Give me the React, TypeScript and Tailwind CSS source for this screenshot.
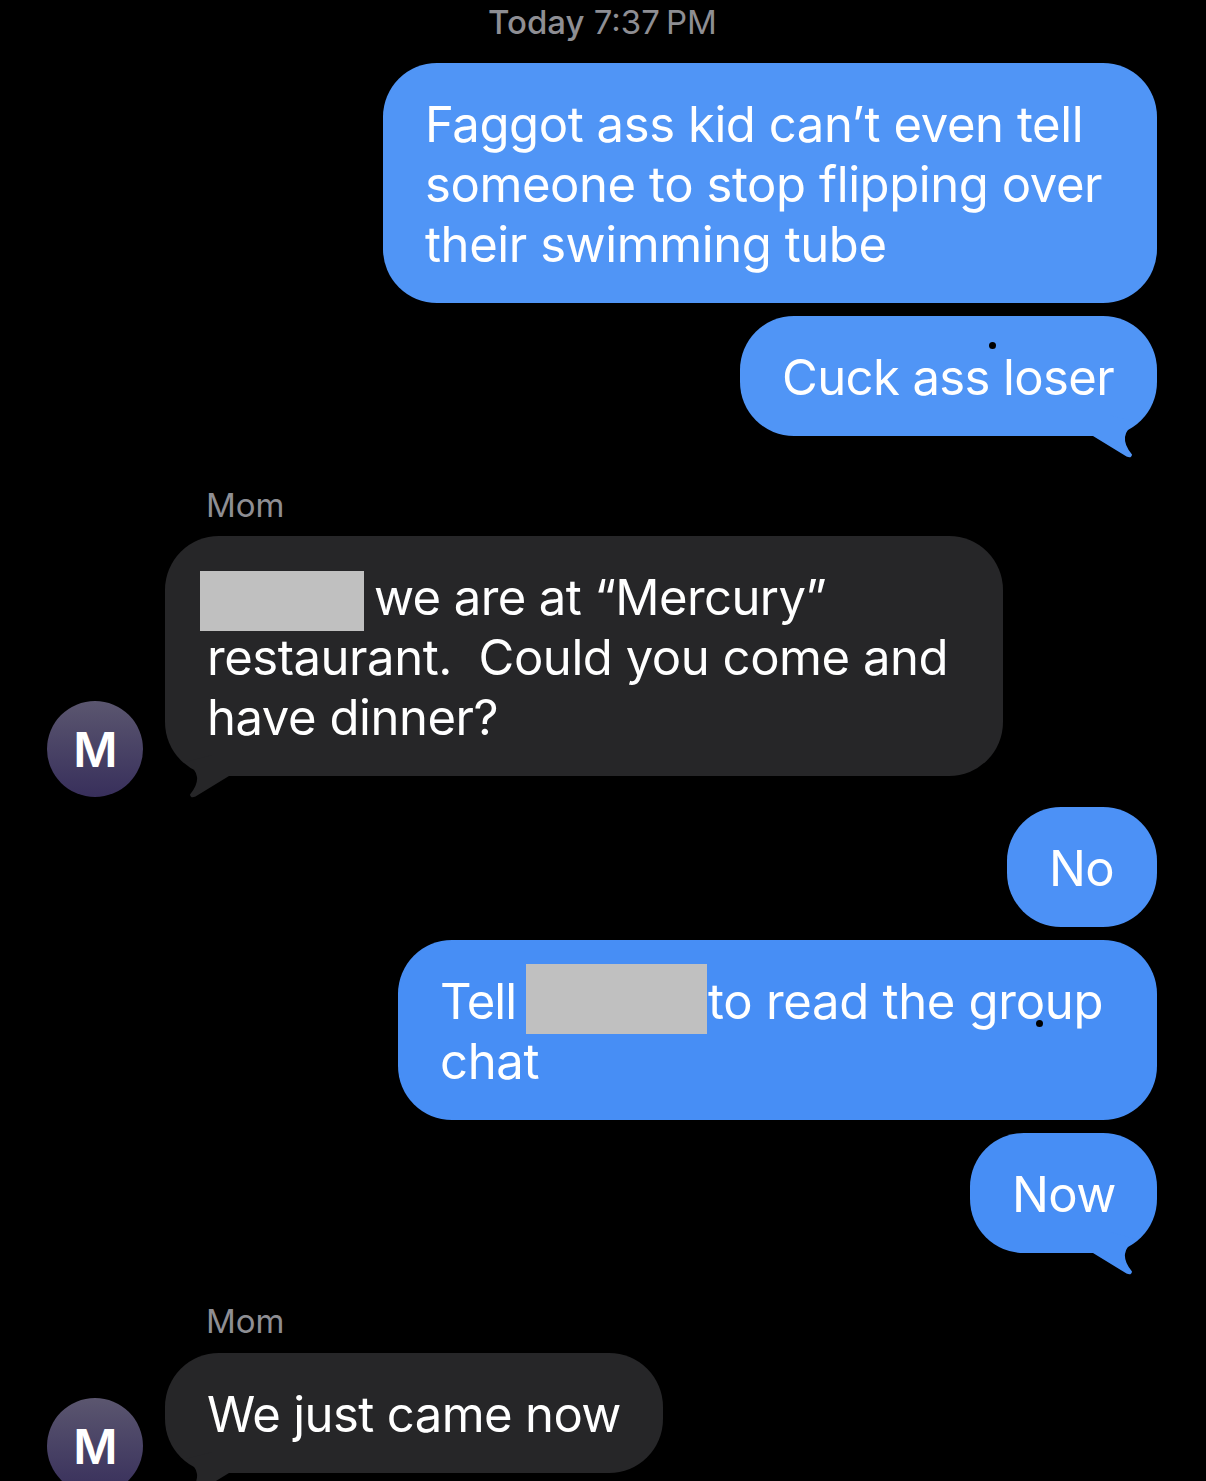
import type { ReactNode } from "react";

function Tail({ color, left }: { color: string; left?: boolean }) {
  return (
    <svg
      width="70"
      height="45"
      viewBox="0 0 70 45"
      className={left ? "absolute left-[7px] bottom-[-24px] -scale-x-100" : "absolute right-[7px] bottom-[-24px]"}
    >
      <path
        d="M13 21 L46.5 41.5 Q51.5 43.8 52 39.5 Q44 30 45 22 Q46 14 56 7 L30 0 L13 0 Z"
        fill={color}
      />
    </svg>
  );
}

function Sent({ children, w, color, tail }: { children: ReactNode; w: string; color: string; tail?: boolean }) {
  return (
    <div className={`relative rounded-[54px] pt-[32px] pb-[28px] pl-[42px] whitespace-pre text-white ${w} ${color === "#5095f6" ? "bg-[#5095f6]" : color === "#4c91f6" ? "bg-[#4c91f6]" : "bg-[#478ef5]"}`}>
      {children}
      {tail && <Tail color={color} />}
    </div>
  );
}

function Avatar() {
  return (
    <div className="flex h-[96px] w-[96px] shrink-0 -mb-[21px] items-center justify-center rounded-full bg-gradient-to-b from-[#5b566f] to-[#382f5b] pt-[2px] text-[48px] leading-none font-semibold text-white">
      M
    </div>
  );
}

function Received({ children, w }: { children: ReactNode; w: string }) {
  return (
    <div className="flex items-end gap-[22px] pl-[47px]">
      <Avatar />
      <div className={`relative rounded-[54px] bg-[#262628] pt-[32px] pb-[28px] pl-[42px] whitespace-pre text-white ${w}`}>
        {children}
        <Tail color="#262628" left />
      </div>
    </div>
  );
}

function Mom() {
  return <div className="pl-[206px] text-[33px] leading-[40px] tracking-normal text-[#8e8e93]">Mom</div>;
}

function Redaction({ w, bar, top, h }: { w: string; bar: string; top: string; h: string }) {
  return (
    <span className={`relative inline-block ${w}`}>
      <span className={`absolute bg-[#c0c0c0] ${bar} ${top} ${h}`} />
    </span>
  );
}

export default function App() {
  return (
    <div className="h-[1481px] overflow-hidden bg-black font-['Inter',sans-serif] text-[49px] leading-[60px] tracking-[-0.6px]">
      <div className="pl-[488px] text-[33px] leading-[44px] tracking-normal text-[#8e8e93]">
        <span className="font-medium">Today</span> {"7:37\u2009PM"}
      </div>
      <div className="mt-[19px] flex flex-col items-end gap-[13px] pr-[49px]">
        <Sent w="w-[774px]" color="#5095f6">
          <div className="tracking-[-0.42px]">
            {"Faggot ass kid can’t even tell\nsomeone to stop flipping over\ntheir swimming tube"}
          </div>
        </Sent>
        <div className="relative">
          <Sent w="w-[417px]" color="#5095f6" tail>
            Cuck ass loser
          </Sent>
          <span className="absolute left-[249px] top-[26px] h-[7px] w-[7px] rounded-full bg-black" />
        </div>
      </div>
      <div className="mt-[49px]">
        <Mom />
      </div>
      <div className="mt-[11px]">
        <Received w="w-[838px]">
          <div className="tracking-[-0.45px]">
            <div>
              <Redaction w="w-[167px]" bar="left-[-7px] w-[164px]" top="top-[-44px]" h="h-[60px]" />
              <span className="tracking-[-0.6px]">{"we are at “Mercury”"}</span>
            </div>
            <div>{"restaurant.  Could you come and"}</div>
            <div>have dinner?</div>
          </div>
        </Received>
      </div>
      <div className="mt-[31px] flex flex-col items-end gap-[13px] pr-[49px]">
        <Sent w="w-[150px]" color="#4c91f6">
          No
        </Sent>
        <div className="relative">
          <Sent w="w-[759px]" color="#478ef5">
            <div className="tracking-[-0.3px]">
              <div>
                <span className="tracking-[-1px]">Tell</span>
                <Redaction w="w-[182px] ml-[10px]" bar="left-0 w-[181px]" top="top-[-55px]" h="h-[70px]" />
                <span>to read the group</span>
              </div>
              <div>chat</div>
            </div>
          </Sent>
          <span className="absolute left-[638px] top-[80px] h-[7px] w-[7px] rounded-full bg-black" />
        </div>
        <Sent w="w-[187px]" color="#478ef5" tail>
          Now
        </Sent>
      </div>
      <div className="mt-[48px]">
        <Mom />
      </div>
      <div className="mt-[12px]">
        <Received w="w-[498px]">We just came now</Received>
      </div>
    </div>
  );
}
